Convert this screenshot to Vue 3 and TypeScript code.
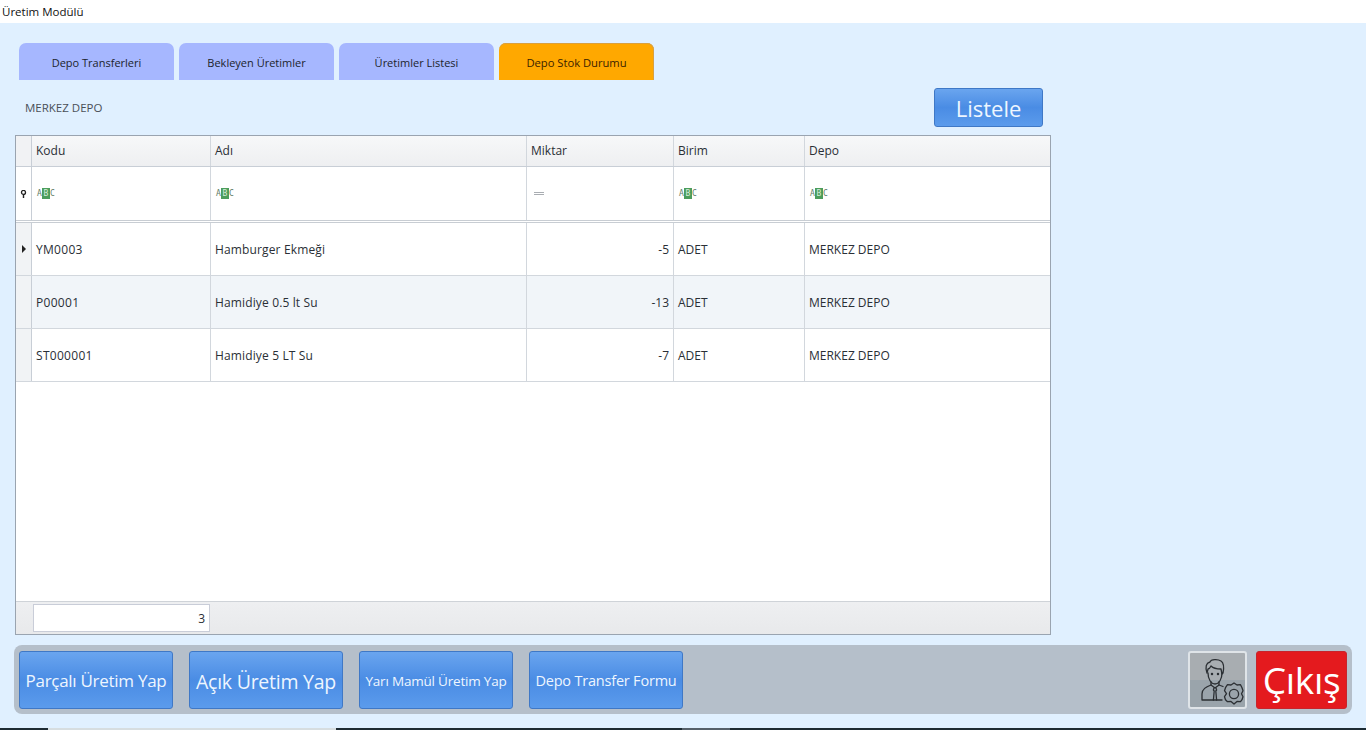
<script setup lang="ts">
interface Row { kod: string; ad: string; miktar: number; birim: string; depo: string }
const tabs = [
  { label: 'Depo Transferleri', active: false },
  { label: 'Bekleyen Üretimler', active: false },
  { label: 'Üretimler Listesi', active: false },
  { label: 'Depo Stok Durumu', active: true },
]
const rows: Row[] = [
  { kod: 'YM0003', ad: 'Hamburger Ekmeği', miktar: -5, birim: 'ADET', depo: 'MERKEZ DEPO' },
  { kod: 'P00001', ad: 'Hamidiye 0.5 lt Su', miktar: -13, birim: 'ADET', depo: 'MERKEZ DEPO' },
  { kod: 'ST000001', ad: 'Hamidiye 5 LT Su', miktar: -7, birim: 'ADET', depo: 'MERKEZ DEPO' },
]
const actions = [
  { label: 'Parçalı Üretim Yap', cls: 'm' },
  { label: 'Açık Üretim Yap', cls: 'l' },
  { label: 'Yarı Mamül Üretim Yap', cls: 's' },
  { label: 'Depo Transfer Formu', cls: 'ms' },
]
</script>

<template>
  <div class="page">
    <header class="title">Üretim Modülü</header>
    <main class="body">
      <div class="tabs">
        <div v-for="t in tabs" :key="t.label" class="tab" :class="{ active: t.active }">{{ t.label }}</div>
      </div>
      <div class="toolbar">
        <span class="store">MERKEZ DEPO</span>
        <button class="btn listele">Listele</button>
      </div>
      <section class="grid">
        <div class="row head">
          <div class="ind"></div>
          <div class="c kod">Kodu</div>
          <div class="c ad">Adı</div>
          <div class="c mik">Miktar</div>
          <div class="c bir">Birim</div>
          <div class="c dep">Depo</div>
        </div>
        <div class="row filter">
          <div class="ind">
            <svg width="7" height="8" viewBox="0 0 7 8"><circle cx="3.5" cy="2.400" r="2" fill="none" stroke="#222" stroke-width="1.300"/><path d="M3.500 4v4" stroke="#222" stroke-width="1.400"/></svg>
          </div>
          <div v-for="k in ['kod','ad','mik','bir','dep']" :key="k" class="c" :class="k">
            <span v-if="k === 'mik'" class="eq"></span>
            <span v-else class="abc"><i>A</i><b>B</b><i>C</i></span>
          </div>
        </div>
        <div class="sep"></div>
        <div v-for="(r, i) in rows" :key="r.kod" class="row data" :class="{ alt: i === 1 }">
          <div class="ind"><span v-if="i === 0" class="arrow"></span></div>
          <div class="c kod">{{ r.kod }}</div>
          <div class="c ad">{{ r.ad }}</div>
          <div class="c mik num">{{ r.miktar }}</div>
          <div class="c bir">{{ r.birim }}</div>
          <div class="c dep">{{ r.depo }}</div>
        </div>
        <div class="spacer"></div>
        <div class="foot"><div class="sum">3</div></div>
      </section>
      <div class="actions">
        <button v-for="a in actions" :key="a.label" class="btn act" :class="a.cls">{{ a.label }}</button>
        <div class="grow"></div>
        <button class="gear" aria-label="Ayarlar">
          <svg width="54" height="54" viewBox="0 0 54 54" fill="none" stroke="#2b2f33" stroke-width="1.300" stroke-linejoin="round" stroke-linecap="round">
            <path d="M16 20c-2-6-1-10 3-11 1-3 8-3 11-1 3 2 3 7 2 12l-1 1-1-5c-4 0-8-1-10-3-1 2-2 3-3 3l-1 4z"/>
            <path d="M17 20c0 6 3 11 7 11s7-5 7-11"/>
            <path d="M20 29v3l4 3 4-3v-3"/>
            <path d="M11 47v-6c0-5 4-7 9-9M28 32l4 1.500M11 47h20"/>
            <path d="M23 35l-.6 2 .8 1-.8 9M25 35l.6 2-.8 1 .8 9"/>
            <circle cx="21" cy="21" r=".6" fill="#2b2f33"/>
            <circle cx="27" cy="21" r=".6" fill="#2b2f33"/>
            <path d="M43 30l3 2 3.500-.3 1.500 3 1 3-1.500 3 1.500 3-1 3-1.500 2-3.500-.3-3 2.600-3-2.600-3.500.3-2-2-1-3 2-3-2-3 1-3 2-3 3.500.3z"/>
            <circle cx="43" cy="41" r="4.600"/>
          </svg>
        </button>
        <button class="exit">Çıkış</button>
      </div>
    </main>
    <footer class="taskbar">
      <span class="t1"></span><span class="t2"></span><span class="t3"></span><span class="t4"></span>
    </footer>
  </div>
</template>

<style>
html, body { margin: 0; padding: 0; overflow: hidden; }
</style>

<style scoped>
.page { width: 1366px; height: 730px; display: flex; flex-direction: column; background: #e0f0ff; font-family: "Open Sans", "Noto Sans", sans-serif; color: #222; overflow: hidden; }
.title { height: 23px; flex: none; background: #fff; font: 11.500px/23px "Open Sans", sans-serif; padding-left: 2px; color: #111; }
.body { flex: 1; display: flex; flex-direction: column; padding: 20px 0 0 15px; min-height: 0; }
.tabs { display: flex; gap: 5px; padding-left: 4px; height: 37px; flex: none; }
.tab { width: 155px; height: 37px; box-sizing: border-box; border-radius: 7px 7px 0 0; background: #a6b7ff; font-size: 11px; padding-top: 1px; color: #20242c; display: flex; align-items: center; justify-content: center; }
.tab.active { background: #ffa800; color: #3a2200; font-size: 11.200px; box-shadow: inset 0 1px 0 #d9a040, inset -1px 0 0 #d9a040; }
.toolbar { width: 1018px; height: 55px; flex: none; display: flex; align-items: center; justify-content: space-between; padding-left: 10px; }
.store { font-size: 11.500px; color: #4a4f57; }
.btn { border: 1px solid #3f78c6; border-radius: 3px; background: linear-gradient(#6aa5ef, #4a8ce4 50%, #5b9bec); color: #eef6ff; font-family: "Open Sans", sans-serif; padding: 0; }
.listele { width: 109px; height: 39px; font-size: 22px; line-height: 1; margin-top: -1px; padding-top: 2px; }
.grid { width: 1036px; height: 500px; flex: none; box-sizing: border-box; border: 1px solid #9aa4b0; background: #fff; display: flex; flex-direction: column; font-size: 12px; color: #2a2f36; }
.row { display: flex; flex: none; }
.ind { width: 15px; flex: none; border-right: 1px solid #c8ced6; background: #f1f3f5; display: flex; align-items: center; justify-content: center; }
.c { box-sizing: border-box; border-right: 1px solid #d2d7dd; display: flex; align-items: center; padding: 0 4px; white-space: nowrap; }
.kod { width: 179px; }
.ad { width: 316px; }
.mik { width: 147px; }
.bir { width: 131px; }
.dep { flex: 1; border-right: 0; }
.num { justify-content: flex-end; }
.head { height: 31px; box-sizing: border-box; border-bottom: 1px solid #c8ced6; background: linear-gradient(#f7f8f9, #eeeff1); }
.head .c { padding-bottom: 2px; }
.head .ind { background: #f1f2f4; }
.filter { height: 53px; background: #fff; }
.filter .ind { background: #fff; }
.sep { height: 3px; flex: none; background: #fff; border-top: 1px solid #c8cdd3; border-bottom: 1px solid #c8cdd3; box-sizing: border-box; }
.data { height: 53px; box-sizing: border-box; border-bottom: 1px solid #d2d7dd; background: #fff; }
.data .kod { letter-spacing: .3px; }
.data .ad { letter-spacing: .14px; }
.data.alt { background: #f1f5f9; }
.arrow { width: 0; height: 0; border-left: 4px solid #222; border-top: 4px solid transparent; border-bottom: 4px solid transparent; }
.eq { width: 10px; height: 3px; border-top: 1px solid #a9adb2; border-bottom: 1px solid #a9adb2; box-sizing: border-box; margin-left: 3px; }
.abc { display: inline-flex; align-items: center; font: 8px/9px "DejaVu Sans Mono", monospace; color: #5f7d68; margin-left: 1px; }
.abc i { font-style: normal; width: 5px; text-align: center; }
.abc b { width: 8px; height: 11px; line-height: 11px; background: #4c9d5c; color: #d8efdc; text-align: center; font-weight: 400; }
.spacer { flex: 1; }
.foot { height: 33px; flex: none; box-sizing: border-box; border-top: 1px solid #cfd3d8; background: linear-gradient(#eeeff1, #e8e9eb); padding: 2px 0 0 17px; }
.sum { width: 177px; height: 28px; box-sizing: border-box; background: #fff; border: 1px solid #c9cdd8; font-size: 12px; line-height: 28px; text-align: right; padding-right: 4px; }
.actions { width: 1338px; height: 69px; flex: none; margin: 10px 0 0 -1px; box-sizing: border-box; background: #b5bfca; border-radius: 8px; display: flex; align-items: center; gap: 16px; padding: 0 5px 0 5px; }
.act { width: 154px; height: 58px; padding-top: 2px; }
.act.m { font-size: 17px; letter-spacing: -.28px; }
.act.l { font-size: 19.500px; letter-spacing: -.25px; padding-top: 4px; }
.act.s { font-size: 13.500px; letter-spacing: -.2px; }
.act.ms { font-size: 14.500px; letter-spacing: -.2px; }
.grow { flex: 1; }
.gear { width: 59px; height: 58px; padding: 0; box-sizing: border-box; border: 2px solid #dfe4e8; border-radius: 3px; background: linear-gradient(#a8adb1 0 50%, #9aa4ab 50%); margin-right: -7px; display: flex; align-items: center; justify-content: center; }
.exit { width: 91px; height: 58px; padding: 0; border: 1px solid #c8242c; border-radius: 3px; background: #e41a1e; color: #fff; font: 37px/1 "Open Sans", sans-serif; letter-spacing: -.3px; }
.taskbar { height: 2px; flex: none; display: flex; background: #1d2b33; }
.t1 { width: 48px; } .t2 { width: 288px; background: #d6dde0; } .t3 { width: 346px; } .t4 { width: 48px; background: #55606a; }
</style>
